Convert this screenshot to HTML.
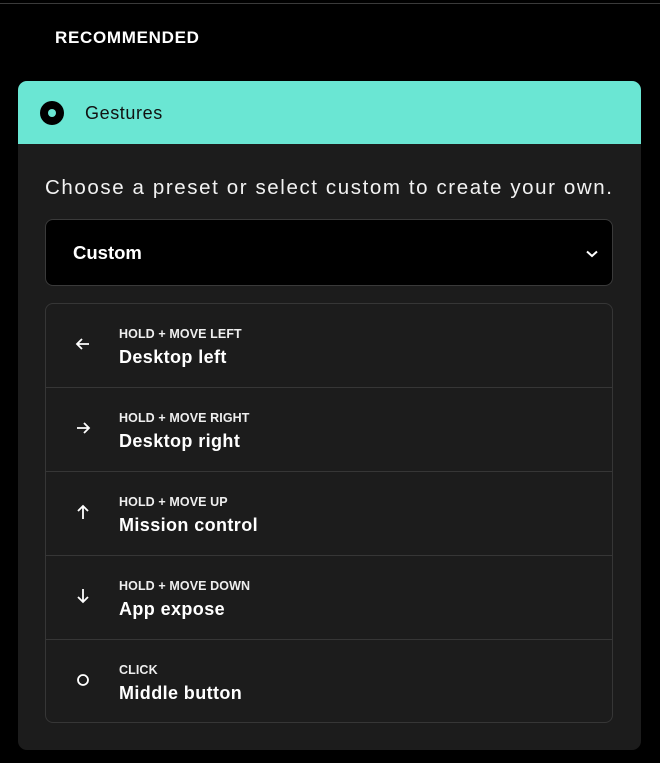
<!DOCTYPE html>
<html><head><style>
*{box-sizing:border-box;margin:0;padding:0}
body{width:660px;height:763px;background:#000;font-family:"Liberation Sans",sans-serif;color:#fff;position:relative;overflow:hidden}
.topline{position:absolute;left:0;top:3px;width:660px;height:1px;background:#3a3a3a}
.rec{position:absolute;left:55px;top:28px;font-size:17px;font-weight:bold;letter-spacing:0.7px}
.card{position:absolute;left:18px;top:81px;width:623px;height:669px;background:#1c1c1c;border-radius:9px;overflow:hidden}
.head{height:63px;background:#6ae6d3;color:#111;position:relative}
.dot{position:absolute;left:22px;top:20px;width:24px;height:24px;border-radius:50%;background:#000}
.dot:after{content:"";position:absolute;left:8px;top:8px;width:8px;height:8px;border-radius:50%;background:#6ae6d3}
.head span{position:absolute;left:67px;top:22px;font-size:18px;letter-spacing:0.6px}
.desc{position:absolute;left:27px;top:95px;font-size:20.5px;letter-spacing:1.6px;color:#f2f2f2;white-space:nowrap}
.sel{position:absolute;left:27px;top:138px;width:568px;height:67px;background:#000;border:1px solid #3a3a3a;border-radius:8px}
.sel span{position:absolute;left:27px;top:22px;font-size:18.5px;font-weight:bold}
.sel svg{position:absolute;right:14px;top:30px}
.list{position:absolute;left:27px;top:222px;width:568px;height:420px;border:1px solid #363636;border-radius:8px}
.row{height:84px;border-bottom:1px solid #363636;position:relative}
.row:last-child{border-bottom:none}
.row svg{position:absolute;left:29px;top:32px}
.row .t{position:absolute;left:73px;top:23px;font-size:12.5px;font-weight:bold;color:#eee;letter-spacing:0.1px}
.row .b{position:absolute;left:73px;top:43px;font-size:18px;font-weight:bold;letter-spacing:0.4px}
</style></head><body>
<div class="topline"></div>
<div class="rec">RECOMMENDED</div>
<div class="card">
<div class="head"><div class="dot"></div><span>Gestures</span></div>
<div class="desc">Choose a preset or select custom to create your own.</div>
<div class="sel"><span>Custom</span><svg width="12" height="8" viewBox="0 0 12 8"><path d="M1 1.5L6 6L11 1.5" stroke="#fff" stroke-width="2" fill="none"/></svg></div>
<div class="list">
<div class="row"><svg width="16" height="16" viewBox="0 0 16 16"><path d="M14 8H2M7 3L2 8L7 13" stroke="#fff" stroke-width="1.8" fill="none"/></svg><div class="t">HOLD + MOVE LEFT</div><div class="b">Desktop left</div></div>
<div class="row"><svg width="16" height="16" viewBox="0 0 16 16"><path d="M2 8H14M9 3L14 8L9 13" stroke="#fff" stroke-width="1.8" fill="none"/></svg><div class="t">HOLD + MOVE RIGHT</div><div class="b">Desktop right</div></div>
<div class="row"><svg width="16" height="16" viewBox="0 0 16 16"><path d="M8 15V2M3 7L8 2L13 7" stroke="#fff" stroke-width="1.8" fill="none"/></svg><div class="t">HOLD + MOVE UP</div><div class="b">Mission control</div></div>
<div class="row"><svg width="16" height="16" viewBox="0 0 16 16"><path d="M8 1V14M3 9L8 14L13 9" stroke="#fff" stroke-width="1.8" fill="none"/></svg><div class="t">HOLD + MOVE DOWN</div><div class="b">App expose</div></div>
<div class="row"><svg width="16" height="16" viewBox="0 0 16 16"><circle cx="8" cy="8" r="5" stroke="#fff" stroke-width="1.8" fill="none"/></svg><div class="t">CLICK</div><div class="b">Middle button</div></div>
</div>
</div>
</body></html>
